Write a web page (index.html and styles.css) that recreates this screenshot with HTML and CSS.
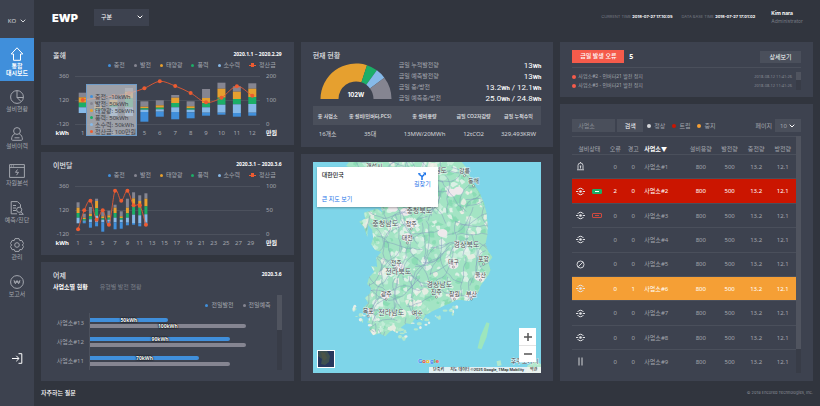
FILE: index.html
```html
<!DOCTYPE html>
<html lang="ko">
<head>
    <meta charset="UTF-8">
    <meta name="viewport" content="width=device-width, initial-scale=1.0">
    <title>EWP Dashboard</title>
    <link rel="stylesheet" href="styles.css">
</head>
<body>

    <!-- Icons shared by the table rows -->
    <svg class="defs" width="0" height="0" aria-hidden="true">
        <symbol id="i-run" viewBox="0 0 18 18">
            <g fill="none" stroke="currentColor" stroke-width="2">
                <path d="M3.200 6A6.600 6.600 0 0 1 14.800 6M14.800 12A6.600 6.600 0 0 1 3.200 12"/>
                <path d="M0 9h4.500M13.500 9h4.500"/>
            </g>
            <circle cx="9" cy="9" r="2.600" fill="currentColor"/>
        </symbol>
        <symbol id="i-alarm" viewBox="0 0 18 18">
            <g fill="none" stroke="currentColor" stroke-width="1.700">
                <path d="M4 14V7a5 5 0 0 1 10 0v7M2 15.500h14M9 2V0M9 8v5M7.500 8h3"/>
            </g>
        </symbol>
        <symbol id="i-ban" viewBox="0 0 18 18">
            <g fill="none" stroke="currentColor" stroke-width="1.800">
                <circle cx="9" cy="9" r="7"/><path d="M4.500 13.500l9-9"/>
            </g>
        </symbol>
        <symbol id="i-pause" viewBox="0 0 18 18">
            <path d="M6 1v16M12 1v16" fill="none" stroke="currentColor" stroke-width="1.800"/>
        </symbol>
    </svg>

    <div class="app">
        <!-- Side menu -->
        <nav class="sidebar">
            <button class="lang" type="button">KO
                <svg width="6" height="4" viewBox="0 0 6 4"><path d="M.7.7L3 3 5.300.7"/></svg>
            </button>
            <a class="side-item active" href="#">
                <svg viewBox="0 0 14 14"><path d="M1.200 7L7 .8 12.800 7H10.500V13.300H3.500V7z"/></svg>
                <span>통합<br>대시보드</span>
            </a>
            <a class="side-item" href="#">
                <svg viewBox="0 0 14 14"><circle cx="7" cy="7" r="6.400"/><path d="M7 .6V7.500H13.300M7 7.500l4 4"/></svg>
                <span>설비현황</span>
            </a>
            <a class="side-item" href="#">
                <svg viewBox="0 0 14 14"><circle cx="7" cy="4" r="3.400"/><path d="M4.800 6.800C2.500 7.800 1.600 10 1.600 12.300Q1.600 13.300 2.600 13.300H11.400Q12.400 13.300 12.400 12.300C12.400 10 11.500 7.800 9.200 6.800M4.500 10.800h5"/></svg>
                <span>설비이력</span>
            </a>
            <a class="side-item" href="#">
                <svg class="wide" viewBox="0 0 16 14"><path d="M.6.6h14.800v12.800H.6zM.6 3.400h14.800M2 2h1M4 2h1M8.500 5.500L6.500 8.300h3L7.500 11.200"/></svg>
                <span>자원분석</span>
            </a>
            <a class="side-item" href="#">
                <svg viewBox="0 0 14 14"><path d="M7 12.800H1.200V.6H7.500L10.500 3.600V6M3 4.500h3M3 7h3M3 9.500h3"/><circle cx="9.200" cy="8.800" r="2.600"/><path d="M11 10.800l2.300 2.500H9"/></svg>
                <span>예측/진단</span>
            </a>
            <a class="side-item" href="#">
                <svg viewBox="0 0 14 14"><path d="M5 .6h4l.8 2 2-.2 1.800 3.200L12.300 7l1.300 1.500-1.800 3.200-2-.2-.8 1.900H5l-.8-1.900-2 .2L.4 8.500 1.700 7 .4 5.600l1.800-3.200 2 .2z"/><circle cx="7" cy="7" r="2.300"/></svg>
                <span>관리</span>
            </a>
            <a class="side-item" href="#">
                <svg viewBox="0 0 14 14"><circle cx="7" cy="7" r="6.400"/><path d="M4 5.200l1.400 3.600L7 5.500l1.600 3.300L10 5.200M3.800 7h6.400"/></svg>
                <span>보고서</span>
            </a>
            <button class="logout" type="button" aria-label="로그아웃">
                <svg width="11" height="11" viewBox="0 0 11 11"><path d="M0 5.500H6.800M4.300 2.800L7 5.500 4.300 8.200M6.500.7H9.800V10.300H6.500"/></svg>
            </button>
        </nav>

        <div class="page">
            <!-- Top bar -->
            <header class="topbar">
                <span class="logo">EWP</span>
                <span class="select-wrap">
                    <select class="select-group" aria-label="구분"><option>구분</option></select>
                    <svg width="6" height="4" viewBox="0 0 6 4"><path d="M.7.7L3 3 5.300.7"/></svg>
                </span>
                <div class="times">
                    <span>CURRENT TIME <b>2018-07-27 17:10:05</b></span>
                    <span>DATA BASE TIME <b>2018-07-27 17:01:02</b></span>
                </div>
                <div class="user">
                    <b>Kim nara</b>
                    <span>Administrator</span>
                </div>
            </header>

            <main class="board">
                <!-- Left column: generation charts -->
                <div class="column">
                    <section class="card chart-card">
                        <div class="card-head">
                            <h2>올해</h2>
                            <time>2020.1.1 ~ 2020.2.29</time>
                        </div>
                        <ul class="legend">
                            <li class="c-blue">충전</li>
                            <li class="c-gray">발전</li>
                            <li class="c-orange">태양광</li>
                            <li class="c-green">풍력</li>
                            <li class="c-sky">소수력</li>
                            <li class="c-line">정산금</li>
                        </ul>
                        <svg class="chart" id="yearChart"></svg>
                        <ul class="tooltip">
                            <li class="c-blue">충전: -10kWh</li>
                            <li class="c-gray">발전: 50kWh</li>
                            <li class="c-orange">태양광: 50kWh</li>
                            <li class="c-green">풍력: 50kWh</li>
                            <li class="c-sky">소수력: 50kWh</li>
                            <li class="c-red">정산금: 100만원</li>
                        </ul>
                    </section>

                    <section class="card chart-card">
                        <div class="card-head">
                            <h2>이번달</h2>
                            <time>2020.3.1 ~ 2020.3.6</time>
                        </div>
                        <ul class="legend">
                            <li class="c-blue">충전</li>
                            <li class="c-gray">발전</li>
                            <li class="c-orange">태양광</li>
                            <li class="c-green">풍력</li>
                            <li class="c-sky">소수력</li>
                            <li class="c-line">정산금</li>
                        </ul>
                        <svg class="chart" id="monthChart"></svg>
                    </section>

                    <section class="card yesterday">
                        <div class="card-head">
                            <h2>어제</h2>
                            <time>2020.3.6</time>
                        </div>
                        <div class="tabs">
                            <button class="tab active" type="button">사업소별 현황</button>
                            <button class="tab" type="button">유형별 발전 현황</button>
                        </div>
                        <div class="scroll-box">
                            <div class="scroll-body">
                                <ul class="legend">
                                    <li class="c-blue">전일발전</li>
                                    <li class="c-gray">전일예측</li>
                                </ul>
                                <div class="hbars">
                                    <div class="hbar-row">
                                        <span class="hbar-name">사업소#13</span>
                                        <div class="hbar-plot">
                                            <div class="hbar c-blue" style="width: 50%">50kWh</div>
                                            <div class="hbar c-gray" style="width: 100%">100kWh</div>
                                        </div>
                                    </div>
                                    <div class="hbar-row">
                                        <span class="hbar-name">사업소#12</span>
                                        <div class="hbar-plot">
                                            <div class="hbar c-blue" style="width: 90%">90kWh</div>
                                            <div class="hbar c-gray" style="width: 100%"></div>
                                        </div>
                                    </div>
                                    <div class="hbar-row">
                                        <span class="hbar-name">사업소#11</span>
                                        <div class="hbar-plot">
                                            <div class="hbar c-blue" style="width: 70%">70kWh</div>
                                            <div class="hbar c-gray" style="width: 90%"></div>
                                        </div>
                                    </div>
                                </div>
                            </div>
                            <div class="scrollbar"><i style="height: 46%"></i></div>
                        </div>
                    </section>
                </div>

                <!-- Middle column: current status and map -->
                <div class="column">
                    <section class="card status">
                        <h2>현재 현황</h2>
                        <div class="status-top">
                            <svg class="gauge" id="gauge" viewBox="0 0 72 36"></svg>
                            <dl class="figures">
                                <dt>금일 누적발전량</dt><dd>13<b>Wh</b></dd>
                                <dt>금일 예측발전량</dt><dd>13<b>Wh</b></dd>
                                <dt>금일 충/방전</dt><dd>13.2<b>Wh</b> / 12.1<b>Wh</b></dd>
                                <dt>금일 예측충/방전</dt><dd>25.0<b>Wh</b> / 24.8<b>Wh</b></dd>
                            </dl>
                        </div>
                        <table class="summary">
                            <thead>
                                <tr><th>총 사업소</th><th>총 설비(인버터,PCS)</th><th>총 설비용량</th><th>금일 CO2저감량</th><th>금일 누적수익</th></tr>
                            </thead>
                            <tbody>
                                <tr><td>16개소</td><td>35대</td><td>13MW/20MWh</td><td>12tCO2</td><td>329,493KRW</td></tr>
                            </tbody>
                        </table>
                    </section>

                    <section class="card map-card">
                        <div class="map">
                            <svg class="map-canvas" id="map" viewBox="0 0 228 211" preserveAspectRatio="xMidYMid slice"></svg>
                            <div class="place">
                                <strong>대한민국</strong>
                                <a class="route" href="#">
                                    <svg width="8" height="8" viewBox="0 0 8 8"><path d="M4 8V4.500L1.500 2.500M4 4.800L6.500 2.200"/><path d="M4.800.5H8V3.600zM0 1l2.800.2L1 3.600z" class="fill"/></svg>
                                    길찾기
                                </a>
                                <a class="larger" href="#">큰 지도 보기</a>
                            </div>
                            <button class="satellite" type="button" aria-label="위성 지도">
                                <svg viewBox="0 0 16 16"><rect width="16" height="16" fill="#27375c"/><path d="M1 0H9L12 5 11 11 7 14 3 13 4 8 0 5z" fill="#3e5150"/><path d="M3 1l4 1 2 5-3 3-2-4z" fill="#4c5546"/></svg>
                            </button>
                            <div class="google"><i>G</i><i>o</i><i>o</i><i>g</i><i>l</i><i>e</i></div>
                            <div class="zoom">
                                <button type="button" aria-label="확대"><svg viewBox="0 0 8 8"><path d="M4 0V8M0 4H8"/></svg></button>
                                <button type="button" aria-label="축소"><svg viewBox="0 0 8 8"><path d="M0 4H8"/></svg></button>
                            </div>
                            <div class="credit"><span>단축키</span><span>지도 데이터 ©2025 Google, TMap Mobility</span><span>약관</span></div>
                        </div>
                    </section>
                </div>

                <!-- Right column: errors and site list -->
                <div class="column">
                    <section class="card errors">
                        <div class="errors-head">
                            <span class="badge">금일 발생 오류</span>
                            <b>5</b>
                            <button class="btn detail" type="button">상세보기</button>
                        </div>
                        <div class="scroll-box">
                            <ul class="error-list">
                                <li>사업소#2 - 인버터21 발전 정지 <time>2018-08-12 11:41:26</time></li>
                                <li>사업소#3 - 인버터21 발전 정지 <time>2018-08-12 11:41:26</time></li>
                            </ul>
                            <div class="scrollbar"><i style="height: 44%"></i></div>
                        </div>
                    </section>

                    <section class="card sites">
                        <form class="filters" onsubmit="return false">
                            <input type="text" placeholder="사업소" aria-label="사업소">
                            <button class="btn search" type="submit">검색</button>
                            <ul class="states">
                                <li class="s-ok">정상</li>
                                <li class="s-trip">트립</li>
                                <li class="s-stop">중지</li>
                            </ul>
                            <label for="rows">페이지</label>
                            <span class="select-wrap">
                                <select class="select-rows" id="rows"><option>10</option></select>
                                <svg width="6" height="4" viewBox="0 0 6 4"><path d="M.7.7L3 3 5.300.7"/></svg>
                            </span>
                        </form>
                        <div class="scroll-box">
                            <table class="site-table">
                                <colgroup>
                                    <col class="w-icon"><col class="w-batt"><col class="w-num"><col class="w-num"><col class="w-name">
                                    <col class="w-cap"><col class="w-val"><col class="w-val"><col class="w-val">
                                </colgroup>
                                <thead>
                                    <tr><th colspan="2">설비상태</th><th>오류</th><th>경고</th><th class="name sorted">사업소▼</th><th>설비용량</th><th>발전량</th><th>충전량</th><th>방전량</th></tr>
                                </thead>
                                <tbody>
                                    <tr><td><svg><use href="#i-alarm"/></svg></td><td></td><td>0</td><td>0</td><td class="name">사업소#1</td><td>800</td><td>500</td><td>13.2</td><td>12.1</td></tr>
                                    <tr class="trip"><td><svg><use href="#i-run"/></svg></td><td><span class="battery charged"></span></td><td>2</td><td>0</td><td class="name">사업소#2</td><td>800</td><td>500</td><td>13.2</td><td>12.1</td></tr>
                                    <tr><td><svg><use href="#i-run"/></svg></td><td><span class="battery empty"></span></td><td>0</td><td>0</td><td class="name">사업소#3</td><td>800</td><td>500</td><td>13.2</td><td>12.1</td></tr>
                                    <tr><td><svg><use href="#i-run"/></svg></td><td></td><td>0</td><td>0</td><td class="name">사업소#4</td><td>800</td><td>500</td><td>13.2</td><td>12.1</td></tr>
                                    <tr><td><svg><use href="#i-ban"/></svg></td><td></td><td>0</td><td>0</td><td class="name">사업소#5</td><td>800</td><td>500</td><td>13.2</td><td>12.1</td></tr>
                                    <tr class="stop"><td><svg><use href="#i-run"/></svg></td><td></td><td>0</td><td>1</td><td class="name">사업소#6</td><td>800</td><td>500</td><td>13.2</td><td>12.1</td></tr>
                                    <tr><td><svg><use href="#i-run"/></svg></td><td></td><td>0</td><td>0</td><td class="name">사업소#7</td><td>800</td><td>500</td><td>13.2</td><td>12.1</td></tr>
                                    <tr><td><svg><use href="#i-run"/></svg></td><td></td><td>0</td><td>0</td><td class="name">사업소#8</td><td>800</td><td>500</td><td>13.2</td><td>12.1</td></tr>
                                    <tr><td><svg><use href="#i-pause"/></svg></td><td></td><td>0</td><td>0</td><td class="name">사업소#9</td><td>800</td><td>500</td><td>13.2</td><td>12.1</td></tr>
                                </tbody>
                            </table>
                            <div class="scrollbar"><i style="height: 90%"></i></div>
                        </div>
                    </section>
                </div>
            </main>

            <footer class="footer">
                <a href="#">자주하는 질문</a>
                <span>© 2018 Encored Technologies, Inc.</span>
            </footer>
        </div>
    </div>

    <script src="charts.js"></script>
</body>
</html>
```

FILE: styles.css
```css
/* Global Styles */
* {
    box-sizing: border-box;
}

body {
    margin: 0;
    background: #31353e;
    color: #a3a6ae;
    font-family: "Noto Sans", "Noto Sans CJK KR", sans-serif;
    font-size: 6px;
    line-height: 8px;
}

h2, ul, dl, dd {
    margin: 0;
    padding: 0;
}

ul {
    list-style: none;
}

a {
    color: inherit;
    text-decoration: none;
}

button, input, select {
    margin: 0;
    padding: 0;
    border: none;
    border-radius: 0;
    background: none;
    color: inherit;
    font: inherit;
}

button {
    cursor: pointer;
}

svg {
    display: block;
}

table {
    width: 100%;
    border-collapse: collapse;
}

th, td {
    padding: 0;
    font-weight: normal;
    text-align: center;
    white-space: nowrap;
}

.defs {
    position: absolute;
}

.app {
    display: flex;
    min-height: 100vh;
}

/* Sidebar */
.sidebar {
    display: flex;
    flex-direction: column;
    width: 34px;
    flex-shrink: 0;
    background: #3d424f;
}

.lang {
    display: flex;
    align-items: center;
    justify-content: center;
    gap: 4px;
    height: 38px;
    padding-top: 3px;
    font-size: 6px;
    color: #d4d6da;
}

.sidebar svg,
.select-wrap svg {
    fill: none;
    stroke: currentColor;
    stroke-width: 1;
}

.side-item {
    display: flex;
    flex-direction: column;
    align-items: center;
    gap: 2px;
    height: 37px;
    padding-top: 9px;
    font-size: 6px;
    line-height: 7px;
    text-align: center;
}

.side-item svg {
    width: 14px;
    height: 14px;
}

.side-item svg.wide {
    width: 16px;
}

.side-item.active {
    height: 43px;
    background: #408fdb;
    color: white;
    font-weight: bold;
}

.logout {
    display: flex;
    justify-content: center;
    margin-top: auto;
    padding-bottom: 42px;
    color: white;
}

/* Top bar */
.page {
    display: flex;
    flex-direction: column;
    flex: 1;
    min-width: 0;
    padding: 0 7px;
}

.topbar {
    display: flex;
    align-items: center;
    height: 34px;
    margin-bottom: 8px;
    padding: 0 10px 0 11px;
}

.logo {
    margin-right: 16px;
    padding-top: 2px;
    font-family: Inter, sans-serif;
    font-size: 11px;
    font-weight: 900;
    color: white;
}

.select-wrap {
    position: relative;
}

.select-wrap svg {
    position: absolute;
    top: 50%;
    right: 6px;
    margin-top: -2px;
    color: white;
    pointer-events: none;
}

.select-wrap select {
    display: block;
    appearance: none;
    color: white;
}

.select-group {
    width: 55px;
    height: 17px;
    padding-left: 7px;
    background: #3d424f;
}

.times {
    display: flex;
    gap: 9px;
    margin-left: auto;
    font-family: Inter, sans-serif;
    font-size: 4px;
    color: #777b84;
}

.times b {
    color: white;
}

.user {
    display: flex;
    flex-direction: column;
    margin-left: 16px;
    font-family: Inter, sans-serif;
    font-size: 5px;
    color: #777b84;
}

.user b {
    color: white;
}

/* Board */
.board {
    display: grid;
    grid-template-columns: repeat(3, minmax(0, 1fr));
    gap: 7px;
    flex: 1;
}

.column {
    display: flex;
    flex-direction: column;
    gap: 7px;
}

.card {
    position: relative;
    padding: 8px 12px;
    background: #3d424f;
}

.column .card:last-child {
    flex: 1;
}

.card h2 {
    font-size: 7px;
    line-height: 11px;
    font-weight: 500;
    color: #e4e5e8;
}

.card-head {
    display: flex;
    justify-content: space-between;
}

.card-head time {
    font-weight: bold;
    font-size: 5px;
    color: white;
}

.legend {
    display: flex;
    justify-content: flex-end;
    gap: 9px;
    padding-right: 6px;
}

.legend li,
.tooltip li,
.states li {
    display: flex;
    align-items: center;
    gap: 3px;
}

.legend li::before,
.tooltip li::before {
    content: "";
    flex-shrink: 0;
    width: 3px;
    height: 3px;
    border-radius: 50%;
}

.legend li::before,
.tooltip li::before,
.hbar {
    background: var(--tone);
}

.c-blue { --tone: #408fdb; }
.c-gray { --tone: #858591; }
.c-orange { --tone: #e6a02f; }
.c-green { --tone: #1cae67; }
.c-sky { --tone: #86b9e8; }
.c-red { --tone: #ec5b31; }
.c-line { --tone: #ec5b31; }

/* line marker: a dot on a short stroke */
.legend .c-line::before {
    width: 7px;
    height: 4px;
    border-radius: 0;
    background:
        radial-gradient(circle, var(--tone) 2px, transparent 2px),
        linear-gradient(var(--tone), var(--tone)) center / 100% 1px no-repeat;
}

/* Stacked charts */
.chart-card {
    padding-bottom: 5px;
}

.chart {
    width: 100%;
    height: 71px;
    font-size: 6px;
    fill: #a3a6ae;
}

.chart .unit {
    fill: white;
    font-weight: bold;
}

.chart .grid {
    stroke: #4c515d;
}

.chart .line {
    fill: none;
    stroke: #ec5b31;
    stroke-opacity: 0.85;
}

.chart .dot {
    fill: #ec5b31;
}

.tooltip {
    position: absolute;
    top: 42px;
    left: 45px;
    width: 51px;
    height: 52px;
    padding: 8px 2px 0 3px;
    border: 1px solid #6f9cc8;
    background: rgba(190, 192, 198, 0.75);
    color: #3c3f47;
    line-height: 6px;
    white-space: nowrap;
}

.tooltip li {
    gap: 2px;
    height: 7px;
}

/* Yesterday */
.tabs {
    display: flex;
    gap: 12px;
}

.tab {
    line-height: 12px;
    color: #7b7f89;
}

.tab.active {
    color: white;
    font-weight: bold;
}

.scroll-box {
    display: flex;
}

.scroll-body {
    flex: 1;
}

.scrollbar {
    width: 5px;
    flex-shrink: 0;
    background: #383c47;
}

.scrollbar i {
    display: block;
    background: #50545f;
}

.yesterday .scroll-box {
    margin-top: 2px;
}

.yesterday .legend {
    padding-top: 6px;
}

.hbars {
    padding-top: 4px;
}

.hbar-row {
    display: flex;
    align-items: center;
    height: 19px;
}

.hbar-name {
    width: 36px;
    padding-right: 5px;
    text-align: right;
}

.hbar-plot {
    display: flex;
    flex-direction: column;
    justify-content: center;
    gap: 2px;
    flex: 1;
    height: 19px;
    margin-right: 31px;
    border-left: 1px solid #4c515d;
}

.hbar {
    height: 4px;
    border-radius: 0 2px 2px 0;
    font-size: 5px;
    font-weight: bold;
    line-height: 4px;
    text-align: center;
    color: white;
    text-shadow: 0 0 1px #000, 0 0 1px #000, 0 0 2px #000;
}

/* Current status */
.status {
    padding-bottom: 4px;
}

.status-top {
    display: flex;
    gap: 7px;
    height: 45px;
}

.gauge {
    width: 72px;
    height: 36px;
    margin: 2px 0 0 7px;
    font: bold 6px Inter, sans-serif;
    fill: white;
    text-anchor: middle;
}

.figures {
    display: grid;
    grid-template-columns: auto 1fr;
    grid-auto-rows: 11px;
    flex: 1;
    line-height: 9px;
}

.figures dd {
    text-align: right;
    font-family: Roboto, sans-serif;
    font-size: 8px;
    color: white;
}

.figures b {
    font-size: 6px;
}

.summary th {
    height: 19px;
    background: #4a4f5b;
    font-size: 5px;
    font-weight: 500;
    color: #e4e5e8;
}

.summary th:first-child {
    width: 30px;
}

.summary td {
    height: 18px;
    color: #d4d6da;
}

/* Map */
.map-card {
    display: flex;
}

.map {
    position: relative;
    flex: 1;
    overflow: hidden;
    background: #7ed5e9;
    color: #444;
}

.map-canvas {
    position: absolute;
    width: 100%;
    height: 100%;
}

.map-canvas text {
    font-size: 6px;
    text-anchor: middle;
    fill: #3f4347;
    stroke: white;
    stroke-opacity: 0.7;
    stroke-width: 1px;
    paint-order: stroke;
}

.map-canvas .province {
    font-size: 7px;
    fill: #4c5257;
}

.place {
    position: absolute;
    top: 5px;
    left: 4px;
    display: grid;
    grid-template-columns: 1fr auto;
    align-content: space-between;
    width: 121px;
    height: 40px;
    padding: 4px 7px 4px 5px;
    background: white;
    box-shadow: 0 1px 2px rgba(0, 0, 0, 0.3);
    color: #1a73e8;
}

.place strong {
    font-weight: 500;
    color: #222;
}

.route {
    display: flex;
    flex-direction: column;
    align-items: center;
    padding-top: 1px;
}

.route svg {
    fill: none;
    stroke: currentColor;
    stroke-width: 1.5;
}

.route .fill {
    fill: currentColor;
    stroke: none;
}

.satellite {
    position: absolute;
    bottom: 5px;
    left: 4px;
    width: 18px;
    height: 18px;
    border: 1px solid white;
}

.google {
    position: absolute;
    bottom: 8px;
    left: 50%;
    margin-left: -9px;
    font-weight: bold;
    text-shadow: 0 0 1px white;
}

.google i {
    font-style: normal;
    color: #4285f4;
}

.google i:nth-child(2), .google i:nth-child(6) { color: #ea4335; }
.google i:nth-child(3) { color: #fbbc05; }
.google i:nth-child(5) { color: #34a853; }

.zoom {
    position: absolute;
    right: 5px;
    bottom: 11px;
    width: 17px;
    background: white;
}

.zoom button {
    display: flex;
    align-items: center;
    justify-content: center;
    width: 17px;
    height: 17px;
}

.zoom button + button {
    border-top: 1px solid #e3e3e3;
}

.zoom svg {
    width: 8px;
    height: 8px;
    stroke: #555;
    stroke-width: 1.5;
}

.credit {
    position: absolute;
    right: 0;
    bottom: 0;
    display: flex;
    gap: 6px;
    padding: 0 4px;
    background: rgba(245, 245, 245, 0.85);
    font-family: Roboto, "Noto Sans CJK KR", sans-serif;
    font-size: 4px;
    font-weight: 500;
    line-height: 6px;
    color: #222;
}

/* Errors */
.errors {
    padding-bottom: 7px;
}

.errors-head {
    display: flex;
    align-items: center;
    gap: 5px;
    padding-bottom: 4px;
    border-bottom: 1px solid #4a4f5b;
    color: white;
}

.badge {
    width: 52px;
    background: #f55b4b;
    line-height: 13px;
    font-weight: 500;
    text-align: center;
}

.errors-head b {
    font-size: 7px;
}

.btn {
    background: #4a4f5b;
    color: white;
    line-height: 12px;
}

.detail {
    width: 41px;
    margin-left: auto;
}

.errors .scroll-box {
    margin-top: 4px;
}

.error-list {
    flex: 1;
    padding-right: 4px;
}

.error-list li {
    display: flex;
    align-items: center;
    gap: 2px;
    font-size: 5px;
    line-height: 9px;
}

.error-list li::before {
    content: "";
    width: 4px;
    height: 4px;
    border-radius: 50%;
    background: #f55b4b;
}

.error-list time {
    margin-left: auto;
    font-size: 4px;
    color: #858993;
}

/* Site list */
.sites {
    display: flex;
    flex-direction: column;
    padding-top: 15px;
}

.filters {
    display: flex;
    align-items: center;
    padding-bottom: 4px;
}

.filters input {
    width: 43px;
    height: 13px;
    padding: 0 6px;
    background: #4a4f5b;
}

.filters input::placeholder {
    color: #8b8f98;
}

.search {
    width: 26px;
    height: 13px;
    margin-left: 2px;
}

.states {
    display: flex;
    gap: 7px;
    margin: 0 auto 0 4px;
}

.states li::before {
    content: "";
    width: 4px;
    height: 4px;
    border-radius: 50%;
    background: #d4d6da;
}

.states .s-trip::before { background: #cb1500; }
.states .s-stop::before { background: #f59f35; }

.filters label {
    margin-right: 3px;
}

.select-wrap .select-rows {
    width: 26px;
    height: 13px;
    padding-left: 5px;
    background: #4a4f5b;
    color: #a3a6ae;
}

.sites .scroll-box {
    flex: 1;
}

.site-table {
    flex: 1;
    table-layout: fixed;
}

.site-table thead {
    border-top: 1px solid #4a4f5b;
}

.site-table th {
    height: 18px;
    padding-top: 6px;
}

.site-table tbody tr {
    border-top: 1px solid #4a4f5b;
}

.site-table .name {
    padding-left: 2px;
    text-align: left;
}

.site-table .sorted {
    color: white;
    font-weight: bold;
}

.site-table svg {
    width: 9px;
    height: 9px;
    margin: 0 auto;
    color: #e4e5e8;
}

.site-table .trip { background: #cb1500; color: white; }
.site-table .stop { background: #f59f35; color: white; }

.w-icon { width: 16px; }
.w-batt { width: 18px; }
.w-num { width: 18px; }
.w-name { width: 43px; }
.w-cap { width: 31px; }

.battery {
    display: block;
    width: 10px;
    height: 5px;
    margin: 0 auto;
    border: 1px solid #d0493f;
    border-radius: 1px;
}

.battery::before {
    content: "";
    display: block;
    width: 4px;
    height: 1px;
    margin: 1px auto;
    background: #d0493f;
}

.battery.charged {
    border-color: #1cae67;
    background: #1cae67;
}

.battery.charged::before {
    background: white;
}

/* Footer */
.footer {
    display: flex;
    align-items: center;
    justify-content: space-between;
    height: 25px;
    padding-bottom: 2px;
    font-family: Inter, "Noto Sans CJK KR", sans-serif;
    font-size: 4px;
    color: #8b8f98;
}

.footer a {
    font-size: 6px;
    font-weight: 500;
    color: white;
}
```

FILE: charts.js
```js
const COLORS = ["#858591", "#e6a02f", "#1cae67", "#86b9e8", "#408fdb"];

// each row: top edge, then the lower edge of every stacked part (kWh)
const year = {
    labels: [1, 2, 3, 4, 5, 6, 7, 8, 9, 10, 11, 12],
    right: [200, 100, 0],
    slots: 12,
    bar: 8,
    stacks: [
        [193, 147, 93, 47, -10, -10], [87, 53, 33, 20, 10, -13], [130, 120, 70, 47, -40, -40],
        [240, 203, 137, 47, -40, -40], [107, 53, 37, 23, 0, -97], [117, 67, 43, 27, 3, -47],
        [170, 143, 90, 47, 0, -73], [107, 57, 37, 23, -3, -63], [230, 140, 87, 47, -7, -37],
        [293, 233, 143, 73, -7, -27], [257, 203, 130, 77, -10, -47], [287, 233, 150, 80, -7, -37]
    ],
    line: [120, 140, 160, 187, 237, 307, 260, 190, 97, 143, 257, 163]
};

const month = {
    labels: [1, 3, 5, 7, 9, 11, 13, 15, 17, 19, 21, 23, 25, 27, 29],
    right: [100, 50, 0],
    slots: 30,
    bar: 3,
    stacks: [
        [197, 143, 90, 43, -13, -13], [83, 43, 30, 13, 3, -13], [150, 83, 57, 27, -3, -57],
        [233, 210, 137, 63, -3, -43], [100, 57, 37, 23, -3, -97], [113, 67, 43, 23, 3, -33],
        [173, 143, 90, 43, -3, -73], [107, 57, 40, 23, -3, -67], [233, 143, 87, 43, -7, -33],
        [297, 237, 163, 73, -10, -27], [267, 210, 143, 67, -13, -43], [287, 233, 157, 77, -7, -33]
    ],
    line: [-73, 117, 213, 23, 117, -27, 313, 213, 313, 167, 167, -27]
};

const y = v => 7 + (360 - v) / 10;

function smooth(p) {
    let d = `M${p[0]}`;
    for (let i = 0; i < p.length - 1; i++) {
        const dx = (p[i + 1][0] - p[i][0]) / 3;
        const slope = k => {
            const a = p[Math.max(k - 1, 0)], b = p[Math.min(k + 1, p.length - 1)];
            return (b[1] - a[1]) / (b[0] - a[0]);
        };
        d += `C${p[i][0] + dx},${p[i][1] + slope(i) * dx} ${p[i + 1][0] - dx},${p[i + 1][1] - slope(i + 1) * dx} ${p[i + 1]}`;
    }
    return d;
}

function drawChart(id, data) {
    const svg = document.getElementById(id);
    const w = svg.clientWidth;
    const step = (w - 44) / data.slots;
    const x = i => 22 + step * (i + 0.5);
    let out = "";

    [360, 120, -120].forEach((v, i) => {
        out += `<path class="grid" d="M22 ${y(v) + 0.5}H${w - 22}"/>`;
        out += `<text x="16" y="${y(v) + 2}" text-anchor="end">${v}</text>`;
        out += `<text x="${w - 16}" y="${y(v) + 2}">${data.right[i]}</text>`;
    });
    out += `<text class="unit" x="16" y="66" text-anchor="end">kWh</text>`;
    out += `<text class="unit" x="${w - 16}" y="66">만원</text>`;
    data.labels.forEach(n => {
        out += `<text x="${x(n - 1)}" y="66" text-anchor="middle">${n}</text>`;
    });
    data.stacks.forEach((s, i) => {
        for (let k = 0; k < 5; k++) {
            out += `<rect x="${x(i) - data.bar / 2}" y="${y(s[k])}" width="${data.bar}" height="${y(s[k + 1]) - y(s[k])}" fill="${COLORS[k]}"/>`;
        }
    });
    const pts = data.line.map((v, i) => [x(i), y(v)]);
    out += `<path class="line" d="${smooth(pts)}"/>`;
    pts.forEach(p => {
        out += `<circle class="dot" cx="${p[0]}" cy="${p[1]}" r="2"/>`;
    });
    svg.innerHTML = out;
}

function drawGauge() {
    const stops = [180, 72, 54, 37, 0];
    const fills = ["#e6a02f", "#1cae67", "#86b9e8", "#858591"];
    const at = (r, a) => `${36 + r * Math.cos(a * Math.PI / 180)} ${36 - r * Math.sin(a * Math.PI / 180)}`;
    let out = "";
    fills.forEach((f, i) => {
        const a = stops[i], b = stops[i + 1];
        out += `<path fill="${f}" d="M${at(35.5, a)}A35.5 35.5 0 0 1 ${at(35.5, b)}L${at(17.5, b)}A17.5 17.5 0 0 0 ${at(17.5, a)}z"/>`;
    });
    document.getElementById("gauge").innerHTML = out + `<text x="36" y="34">102W</text>`;
}

function drawMap() {
    let seed = 7;
    const rnd = () => (seed = (seed * 16807) % 2147483647) / 2147483647;
    const coast = "M36 0L148 0 152 5 156 13 161 23 166 31 170 40 173 51 174 62 174 72 172 82 175 90 179 95 175 101 177 108 175 113 171 118 167 124 165 130 160 136 155 139 149 138 143 138 137 141 132 143 126 146 119 149 112 153 109 159 106 156 101 157 98 162 93 161 88 165 84 171 79 168 76 170 72 174 66 171 60 173 56 168 58 162 54 160 58 155 54 150 50 146 55 141 52 136 57 131 58 126 54 122 56 115 61 110 58 104 64 105 63 96 68 90 62 88 58 82 60 76 59 68 55 63 54 75 51 65 46 60 52 57 51 51 57 49 64 47 69 51 68 44 60 35 55 22 44 10 33 4z";
    let out = `<defs><clipPath id="land"><path d="${coast}"/></clipPath></defs>`;
    out += `<path d="${coast}" fill="#a3e4c4"/><g clip-path="url(#land)">`;

    // forests and plains
    const fills = ["#86d9b2", "#c9efdc", "#e9f3ee", "#f3efe9", "#b9ead0"];
    for (let i = 0; i < 620; i++) {
        const cx = 40 + rnd() * 140, cy = rnd() * 175, r = 1 + rnd() * 2.6;
        const west = cx < 90 || cy > 140;
        const f = fills[Math.floor(rnd() * (west ? 5 : 3.4))];
        let d = "";
        for (let k = 0; k < 7; k++) {
            const rr = r * (0.5 + rnd()), a = k * 0.9;
            d += `${k ? "L" : "M"}${(cx + rr * Math.cos(a)).toFixed(1)} ${(cy + rr * Math.sin(a)).toFixed(1)}`;
        }
        out += `<path d="${d}z" fill="${f}" opacity=".8"/>`;
    }
    // towns
    [[94, 75], [86, 105], [72, 133], [140, 103], [166, 115], [158, 133], [98, 62], [129, 71], [138, 31], [145, 29], [92, 50], [80, 46], [141, 134], [55, 150]].forEach(c => {
        out += `<ellipse cx="${c[0]}" cy="${c[1]}" rx="5" ry="4" fill="#eee9ec"/>`;
    });
    // roads
    for (let i = 0; i < 130; i++) {
        let px = 45 + rnd() * 130, py = rnd() * 172, a = rnd() * 6.3;
        let d = `M${px.toFixed(1)} ${py.toFixed(1)}`;
        for (let k = 0; k < 8; k++) {
            a += (rnd() - 0.5) * 1.1;
            px += Math.cos(a) * 5;
            py += Math.sin(a) * 5;
            d += `L${px.toFixed(1)} ${py.toFixed(1)}`;
        }
        out += `<path d="${d}" fill="none" stroke="#7f95bd" stroke-width=".6" opacity=".75"/>`;
    }
    out += "</g>";

    // islands
    for (let i = 0; i < 60; i++) {
        const t = rnd();
        const cx = i < 38 ? 38 + t * 55 : 95 + t * 52;
        const cy = i < 38 ? 142 + t * 24 + rnd() * 14 : 162 - t * 22 + rnd() * 9;
        out += `<ellipse cx="${cx}" cy="${cy}" rx="${0.6 + rnd() * 2}" ry="${0.5 + rnd() * 1.5}" fill="${rnd() > 0.4 ? "#b3e8cd" : "#e6efe9"}"/>`;
    }
    out += `<path d="M173 160L176 161 173 175 168 187 164 186 167 174z" fill="#9de6bd"/>`;
    out += `<path d="M183 199l4-1 1 5-4 1zM214 203l8-4 6 3v9h-16z" fill="#b3e8cd"/>`;

    const provinces = [["강원도", 124, 11], ["충청북도", 106, 51], ["충청남도", 72, 64], ["경상북도", 153, 85], ["전라북도", 85, 112], ["경상남도", 126, 125], ["전라남도", 78, 153]];
    provinces.forEach(p => {
        out += `<text class="province" x="${p[1]}" y="${p[2]}">${p[0]}</text>`;
    });
    const cities = [["강릉", 151, 11], ["동해", 160, 21], ["청주", 98, 64], ["대전", 94, 78], ["포항", 170, 99], ["전주", 83, 103], ["대구", 140, 102], ["울산", 167, 115], ["광주", 73, 134], ["진주", 123, 132], ["창원", 141, 134], ["부산", 158, 134], ["목포", 55, 151], ["여수", 104, 153]];
    cities.forEach(c => {
        out += `<circle cx="${c[1]}" cy="${c[2] + 3}" r="1" fill="#fff" stroke="#555" stroke-width=".5"/>`;
        out += `<text x="${c[1]}" y="${c[2]}">${c[0]}</text>`;
    });
    out += `<text x="61" y="6">개성시</text><text x="211" y="201">후쿠오카시</text>`;
    document.getElementById("map").innerHTML = out;
}

function drawCharts() {
    drawChart("yearChart", year);
    drawChart("monthChart", month);
}

drawCharts();
drawGauge();
drawMap();
window.addEventListener("resize", drawCharts);
```
